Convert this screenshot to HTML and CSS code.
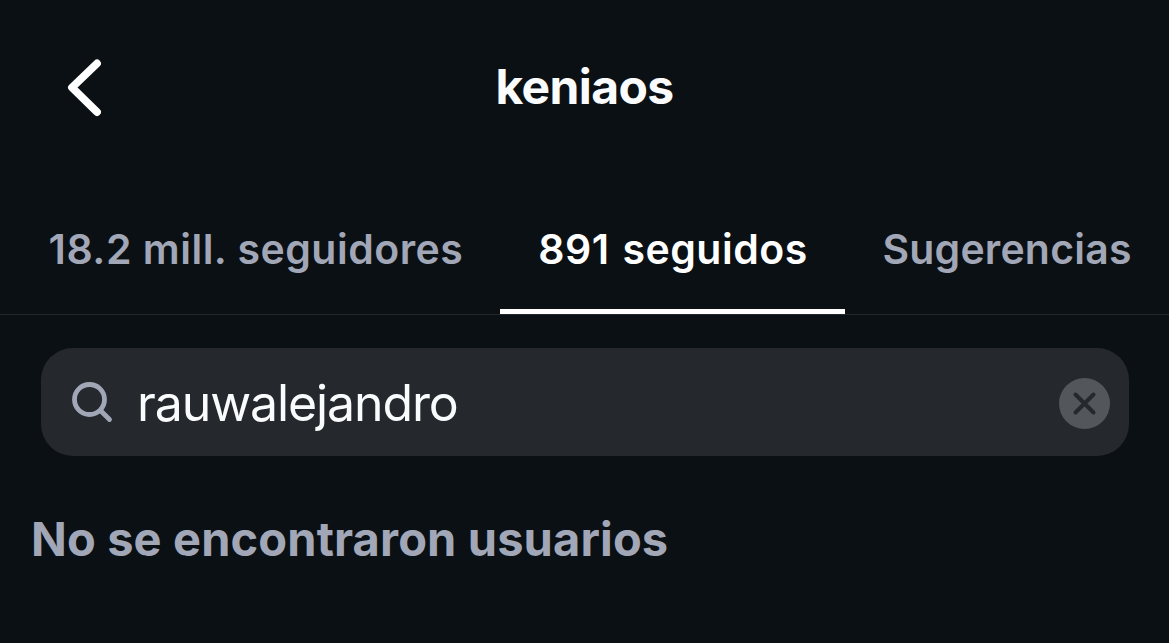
FILE: index.html
```html
<!DOCTYPE html>
<html lang="es">

<head>
  <meta charset="UTF-8">
  <title>keniaos</title>
  <meta name="viewport" content="width=device-width, initial-scale=1">
  <link rel="stylesheet" href="styles.css">
</head>

<body>
  <header>
    <a class="back" title="Atrás">
      <svg width="40" height="64" viewBox="0 0 40 64"><path d="M34 8.500 L9 32.500 L34 57" /></svg>
    </a>
    <h1>keniaos</h1>
  </header>

  <nav class="tabs">
    <a class="tab followers">18.2 mill. seguidores</a>
    <a class="tab following active">891 seguidos</a>
    <a class="tab suggested">Sugerencias</a>
  </nav>

  <main>
    <div class="search">
      <svg class="lens" width="44" height="44" viewBox="0 0 44 44"><circle cx="19.500" cy="19.500" r="15" /><path d="M30.500 30.500 L39.500 39.500" /></svg>
      <span class="query">rauwalejandro</span>
      <a class="clear" title="Borrar">
        <svg width="51" height="51" viewBox="0 0 51 51"><circle cx="25.500" cy="25.500" r="25.500" /><path d="M16.500 16.500 L34.500 34.500 M34.500 16.500 L16.500 34.500" /></svg>
      </a>
    </div>
    <p class="empty">No se encontraron usuarios</p>
  </main>
</body>

</html>
```
FILE: styles.css
```css
* {
  box-sizing: border-box;
}

body {
  background: #0b1014;
  color: #fafbfd;
  margin: 0;
  font-family: Inter, "Liberation Sans", sans-serif;
  white-space: nowrap;
}

svg {
  display: block;
  fill: none;
}

header {
  display: grid;
  grid-template-columns: 120px 1fr 120px;
  align-items: center;
  height: 186px;
  padding-bottom: 12px;
}

.back {
  padding-left: 63px;
}

.back path {
  stroke: #fff;
  stroke-width: 7.8;
  stroke-linecap: round;
  stroke-linejoin: round;
}

h1 {
  margin: 0;
  font-size: 48px;
  font-weight: 700;
  line-height: 60px;
  letter-spacing: -.6px;
  text-align: center;
}

.tabs {
  display: flex;
  height: 129px;
  border-bottom: 1px solid #22272b;
}

.tab {
  display: flex;
  justify-content: center;
  align-items: center;
  width: 345px;
  padding-top: 2px;
  border-bottom: 5px solid transparent;
  color: #a1a7b7;
  font-size: 41px;
  font-weight: 600;
  letter-spacing: .5px;
}

.followers {
  width: 500px;
  padding-left: 12px;
}

.following {
  padding-left: 1px;
  word-spacing: 2px;
}

.suggested {
  width: 324px;
  letter-spacing: .2px;
}

.active {
  border-color: #fff;
  color: #fff;
}

main {
  padding: 33px 40px 0 41px;
}

.search {
  display: flex;
  align-items: center;
  height: 108px;
  padding: 0 19px 0 29px;
  border-radius: 32px;
  background: #25292d;
}

.lens {
  stroke: #a1a7b7;
  stroke-width: 4.8;
  stroke-linecap: round;
}

.query {
  flex: 1;
  margin-left: 23px;
  padding-top: 2px;
  font-size: 50px;
  letter-spacing: -1.1px;
}

.clear {
  padding-top: 3px;
}

.clear circle {
  fill: #53565b;
}

.clear path {
  stroke: #25292d;
  stroke-width: 4;
  stroke-linecap: round;
}

.empty {
  margin: 53px 0 0 -10px;
  color: #a1a7b7;
  font-size: 47px;
  font-weight: 700;
  line-height: 60px;
  letter-spacing: .13px;
}
```
